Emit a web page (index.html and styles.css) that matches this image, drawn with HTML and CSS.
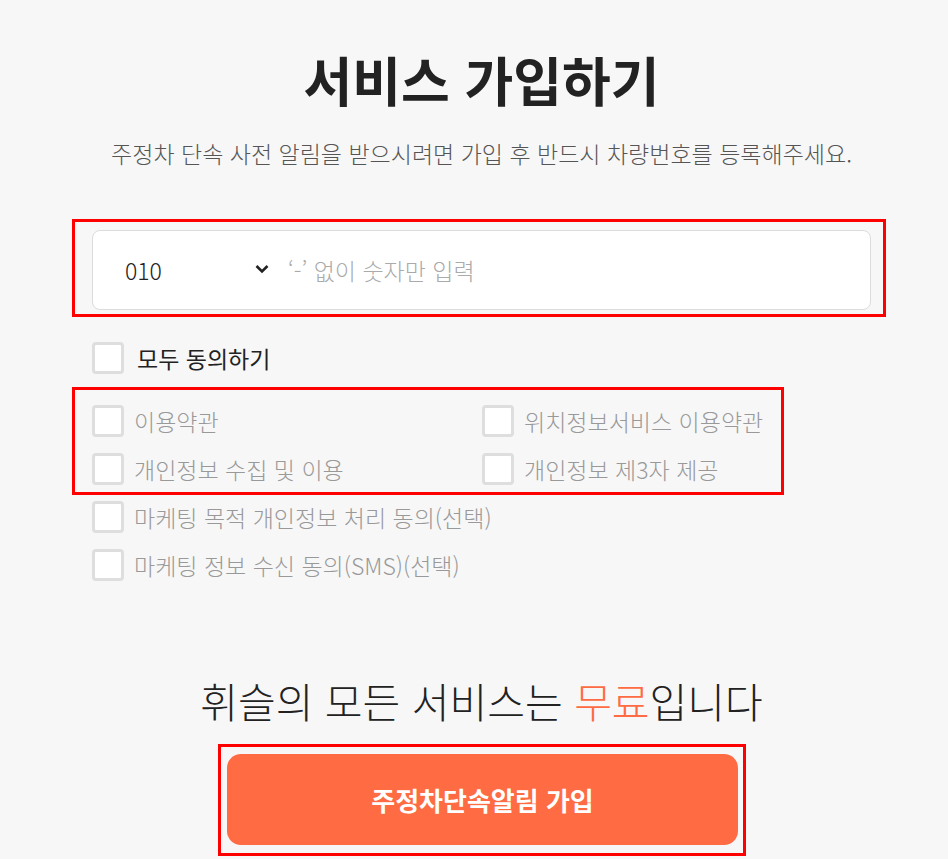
FILE: index.html
```html
<!DOCTYPE html>
<html lang="ko">
<head>
<meta charset="utf-8">
<title>서비스 가입하기</title>
<link rel="stylesheet" href="styles.css">
</head>
<body>
<main class="page">
  <h1 class="title">서비스 가입하기</h1>
  <p class="subtitle">주정차 단속 사전 알림을 받으시려면 가입 후 반드시 차량번호를 등록해주세요.</p>

  <div class="mark mark-phone">
    <div class="phone">
      <div class="code">
        <span>010</span>
        <svg class="chev" width="14" height="10" viewBox="0 0 14 10"><path d="M1.5 2 L7 7.5 L12.5 2" fill="none" stroke="#222" stroke-width="2.6"/></svg>
      </div>
      <span class="placeholder">‘-’ 없이 숫자만 입력</span>
    </div>
  </div>

  <label class="check all"><span class="box"></span><span>모두 동의하기</span></label>

  <div class="mark mark-terms">
    <label class="check"><span class="box"></span><span>이용약관</span></label>
    <label class="check"><span class="box"></span><span>위치정보서비스 이용약관</span></label>
    <label class="check"><span class="box"></span><span>개인정보 수집 및 이용</span></label>
    <label class="check"><span class="box"></span><span>개인정보 제3자 제공</span></label>
  </div>

  <div class="optional">
    <label class="check"><span class="box"></span><span>마케팅 목적 개인정보 처리 동의(선택)</span></label>
    <label class="check"><span class="box"></span><span>마케팅 정보 수신 동의(SMS)(선택)</span></label>
  </div>

  <p class="free">휘슬의 모든 서비스는 <em>무료</em>입니다</p>

  <div class="mark mark-btn">
    <button class="submit">주정차단속알림 가입</button>
  </div>
</main>
</body>
</html>
```

FILE: styles.css
```css
* { box-sizing: border-box; }
html, body { margin: 0; padding: 0; }
body {
  background: #f7f7f7;
  font-family: "Noto Sans CJK KR", "Noto Sans", sans-serif;
  color: #222;
}
.page {
  width: 779px;
  margin-left: 92px;
  padding-top: 46px;
}
.title {
  margin: 0;
  font-size: 53px;
  line-height: 66px;
  font-weight: 700;
  text-align: center;
  color: #222;
}
.subtitle {
  margin: 26px 0 0;
  font-size: 23px;
  line-height: 30px;
  font-weight: 300;
  text-align: center;
  color: #555;
}
.mark {
  border: 3px solid #ff0000;
}
.mark-phone {
  margin: 51px 0 0 -20px;
  width: 814px;
  padding: 8px 12px 4px 17px;
}
.phone {
  height: 80px;
  background: #fff;
  border: 1px solid #dcdcdc;
  border-radius: 8px;
  display: flex;
  align-items: center;
  padding-left: 32px;
  font-size: 23px;
}
.code {
  width: 144px;
  display: flex;
  align-items: center;
  justify-content: space-between;
  color: #222;
  font-weight: 300;
}
.chev { display: block; margin-top: -2px; }
.placeholder {
  margin-left: 19px;
  color: #aaa;
  font-weight: 300;
}
.check {
  display: flex;
  align-items: center;
  height: 32px;
  font-size: 23px;
  font-weight: 300;
  color: #999;
}
.box {
  width: 32px;
  height: 32px;
  flex: none;
  background: #fff;
  border: 3px solid #dedede;
  border-radius: 4px;
  margin-right: 10px;
}
.check.all {
  margin-top: 25px;
  color: #222;
  font-weight: 400;
}
.check.all .box { margin-right: 13px; }
.mark-terms {
  margin: 13px 0 0 -20px;
  width: 712px;
  padding: 15px 0 7px 17px;
  display: grid;
  grid-template-columns: 390px 1fr;
  row-gap: 16px;
}
.optional {
  margin-top: 6px;
  display: flex;
  flex-direction: column;
  gap: 16px;
}
.free {
  margin: 94px 0 0;
  font-size: 41px;
  line-height: 50px;
  font-weight: 300;
  text-align: center;
  color: #222;
}
.free em {
  font-style: normal;
  color: #ff6b43;
}
.mark-btn {
  margin: 19px 0 0 126px;
  width: 528px;
  padding: 7px 5px 8px 6px;
}
.submit {
  display: block;
  width: 100%;
  height: 91px;
  border: 0;
  border-radius: 14px;
  background: #ff6b43;
  color: #fff;
  font-family: inherit;
  font-size: 26px;
  font-weight: 700;
  padding: 0;
}
```
